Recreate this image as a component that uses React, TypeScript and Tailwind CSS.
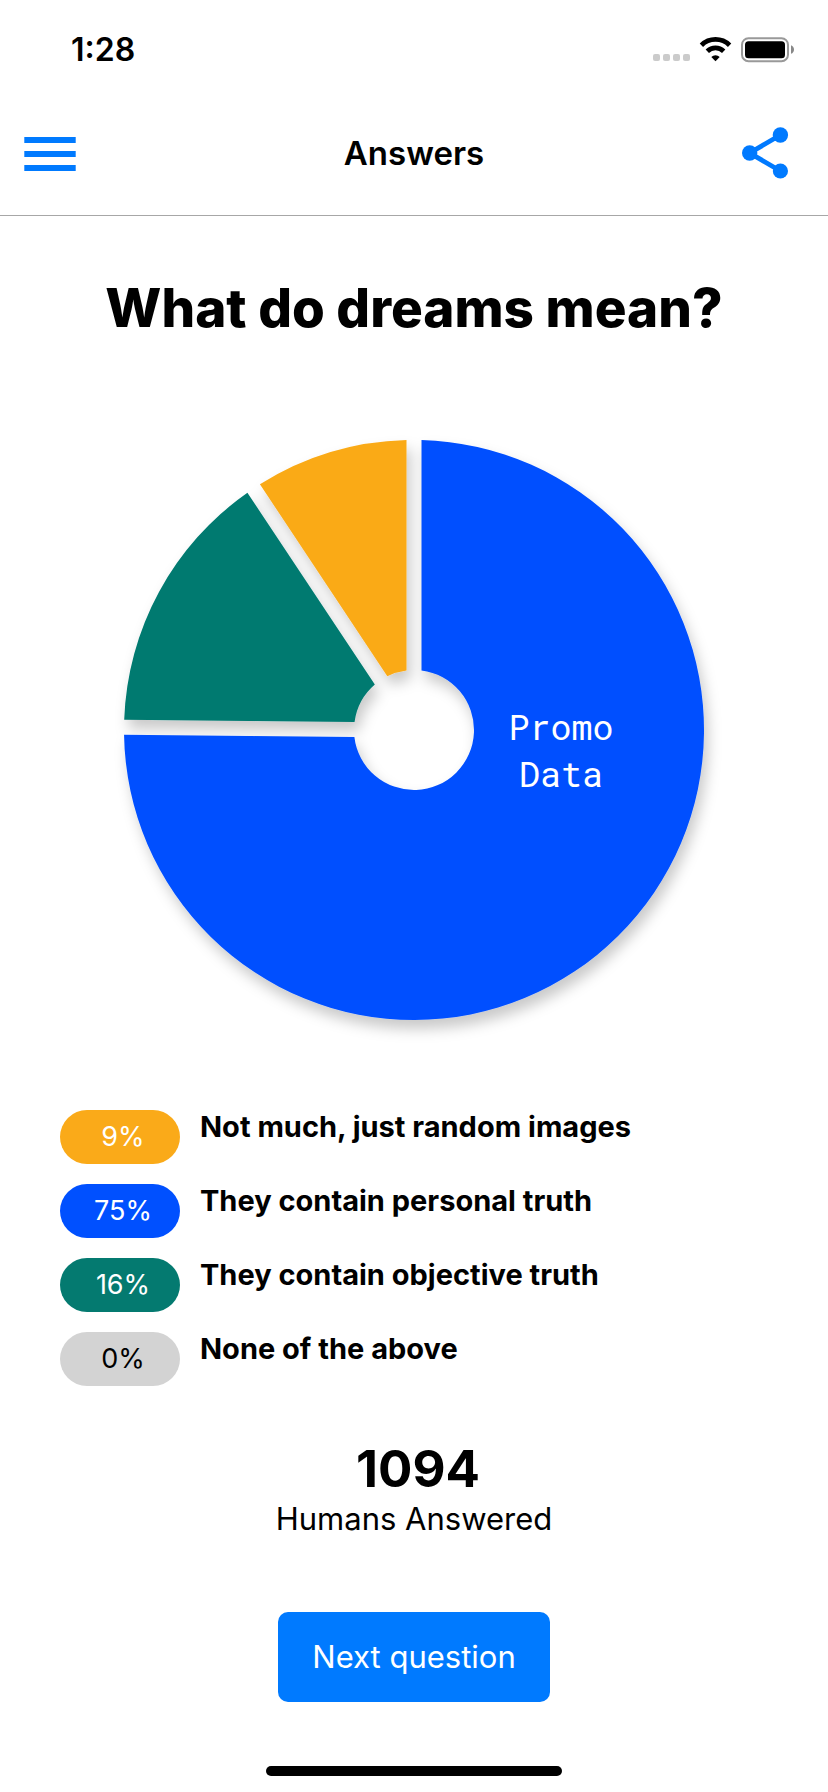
const answers = [
  { percent: '9%', label: 'Not much, just random images', pill: 'bg-[#faaa19] text-white' },
  { percent: '75%', label: 'They contain personal truth', pill: 'bg-[#0050ff] text-white' },
  { percent: '16%', label: 'They contain objective truth', pill: 'bg-[#047a70] text-white' },
  { percent: '0%', label: 'None of the above', pill: 'bg-[#d3d3d3] text-black' },
];

const slices = [
  { from: 0, to: 270.55, color: '#0050ff' },
  { from: 270.55, to: 326.42, color: '#047a70' },
  { from: 326.42, to: 360, color: '#faaa19' },
];

const OUTER = 290;
const INNER = 60;
const HALF_GAP = 7.5;

// Ring segment whose straight edges stay parallel to the neighbouring slice.
function slicePath(from: number, to: number) {
  const point = (radius: number, degrees: number, side: number) => {
    const angle = (degrees * Math.PI) / 180 + side * Math.asin(HALF_GAP / radius);
    return `${(radius * Math.sin(angle)).toFixed(2)} ${(-radius * Math.cos(angle)).toFixed(2)}`;
  };
  const large = to - from > 180 ? 1 : 0;
  return [
    `M${point(OUTER, from, 1)}`,
    `A${OUTER} ${OUTER} 0 ${large} 1 ${point(OUTER, to, -1)}`,
    `L${point(INNER, to, -1)}`,
    `A${INNER} ${INNER} 0 ${large} 0 ${point(INNER, from, 1)}Z`,
  ].join('');
}

function StatusBar() {
  return (
    <div className="flex h-[90px] items-center justify-between pt-[10px] pr-[33px] pl-[71px]">
      <span className="text-[32px] leading-10 font-semibold">1:28</span>
      <svg className="h-[26px] w-[142px]" viewBox="0 0 142 26" aria-hidden="true">
        <g fill="#cbcbcb">
          <rect x="0" y="17" width="7" height="7" rx="2" />
          <rect x="10" y="17" width="7" height="7" rx="2" />
          <rect x="20" y="17" width="7" height="7" rx="2" />
          <rect x="30" y="17" width="7" height="7" rx="2" />
        </g>
        <g fill="none" stroke="#000" strokeWidth="4.8">
          <path d="M48.4 8.2a20.2 20.2 0 0 1 28.2 0" />
          <path d="M54.3 14.2a11.8 11.8 0 0 1 16.4 0" />
        </g>
        <path d="M62.5 24.2l-4.2-4.3a6 6 0 0 1 8.4 0z" />
        <rect x="89" y="1.2" width="46" height="23" rx="6.5" fill="none" stroke="#999" strokeWidth="2" />
        <rect x="92" y="4.2" width="40" height="17" rx="3.5" />
        <path d="M138 8.2c4 1.4 4 7.2 0 8.6z" fill="#888" />
      </svg>
    </div>
  );
}

function Header() {
  return (
    <header className="flex h-[126px] items-center justify-between border-b border-[#a7a7a7] px-6">
      <button type="button" aria-label="Menu" className="flex w-[62px] items-center">
        <svg className="h-[37px] w-[52px]" viewBox="0 0 52 37" fill="#007aff" aria-hidden="true">
          <rect x="0.3" y="3" width="51.4" height="6" />
          <rect x="0.3" y="17" width="51.4" height="6" />
          <rect x="0.3" y="31" width="51.4" height="6" />
        </svg>
      </button>
      <h1 className="text-[33px] leading-10 font-semibold">Answers</h1>
      <button type="button" aria-label="Share" className="flex w-[62px] items-center">
        <svg className="h-[52px] w-[47px]" viewBox="0 0 47 52" fill="#007aff" aria-hidden="true">
          <path d="M38.4 8L7.7 26l30.7 18" fill="none" stroke="#007aff" strokeWidth="4.8" />
          <circle cx="38.4" cy="8" r="7.7" />
          <circle cx="7.7" cy="26" r="7.7" />
          <circle cx="38.4" cy="44" r="7.6" />
        </svg>
      </button>
    </header>
  );
}

function PieChart() {
  return (
    <svg
      className="mx-auto mt-[100px] w-full max-w-[580px] overflow-visible"
      viewBox="-290 -290 580 580"
      role="img"
      aria-label="Answers by share"
    >
      <defs>
        <filter id="shade" x="-10%" y="-10%" width="120%" height="120%">
          <feDropShadow dx="4" dy="9" stdDeviation="7" floodColor="#000" floodOpacity="0.21" />
        </filter>
      </defs>
      <g filter="url(#shade)">
        {slices.map((slice) => (
          <path key={slice.color} d={slicePath(slice.from, slice.to)} fill={slice.color} />
        ))}
      </g>
      <g
        className="font-['Roboto_Mono','DejaVu_Sans_Mono',monospace] text-[35px]"
        fill="#fff"
        textAnchor="middle"
      >
        <text x="147" y="10">Promo</text>
        <text x="147" y="57">Data</text>
      </g>
    </svg>
  );
}

export default function App() {
  return (
    <div className="flex min-h-screen flex-col bg-white font-['Inter',sans-serif] text-black">
      <StatusBar />
      <Header />
      <main className="flex flex-1 flex-col">
        <h2 className="mt-[60px] text-center text-[53px] leading-[64px] font-extrabold">
          What do dreams mean?
        </h2>
        <PieChart />
        <ul className="mt-[90px] flex flex-col gap-5 px-[60px]">
          {answers.map((answer) => (
            <li key={answer.label} className="flex items-start gap-5">
              <span
                className={`h-[54px] w-[120px] shrink-0 rounded-full pl-1.5 text-center text-[27px] leading-[54px] ${answer.pill}`}
              >
                {answer.percent}
              </span>
              <span className="text-[29px] leading-[34px] font-bold">{answer.label}</span>
            </li>
          ))}
        </ul>
        <div className="mt-[53px] flex flex-col items-center">
          <strong className="pl-2 text-[51px] leading-[60px] font-bold">1094</strong>
          <span className="text-[31px] leading-10">Humans Answered</span>
        </div>
        <button
          type="button"
          className="mx-auto mt-[73px] h-[90px] rounded-[10px] bg-[#007aff] px-[34px] text-[31px] leading-10 text-white"
        >
          Next question
        </button>
      </main>
      <div className="mx-auto mb-4 h-[10px] w-[296px] rounded-full bg-black" />
    </div>
  );
}
